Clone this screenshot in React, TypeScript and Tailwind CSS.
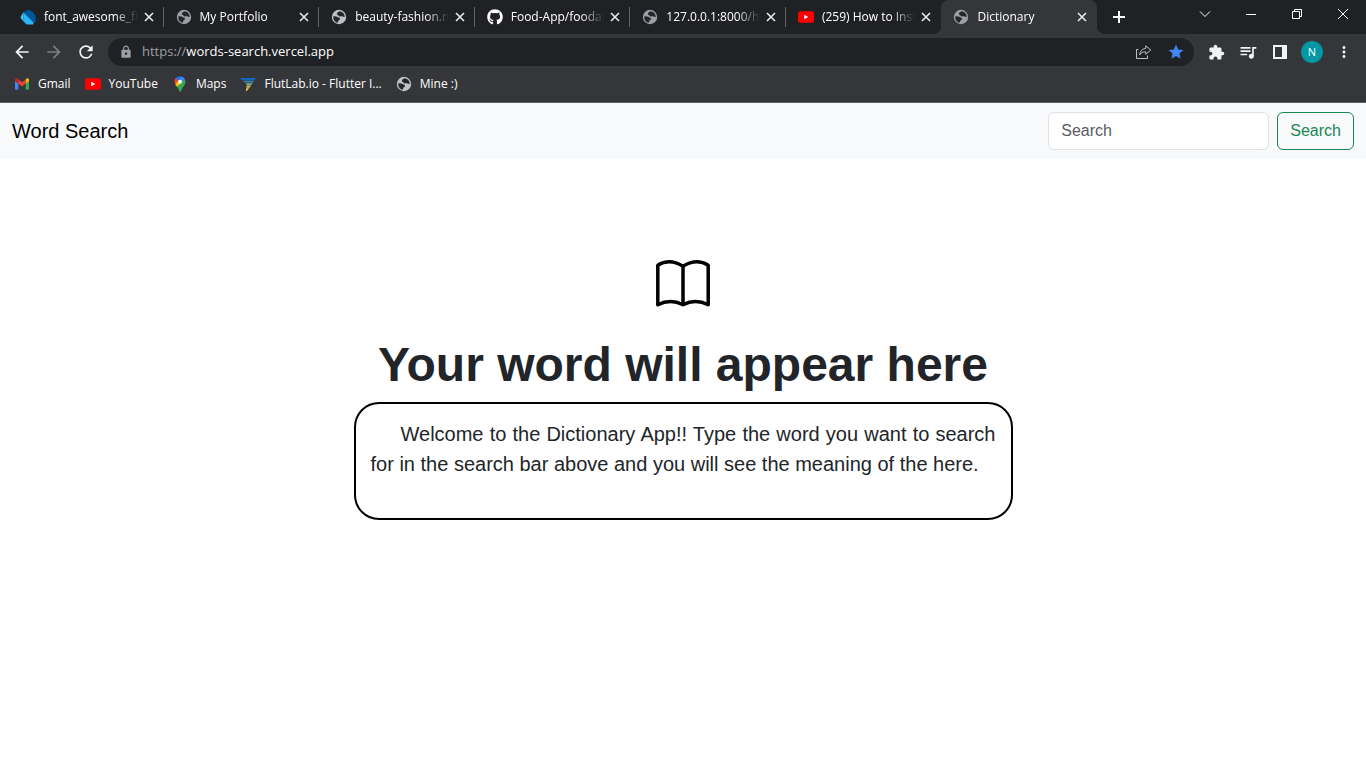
import type { ReactNode } from "react";
import { FaGithub } from "react-icons/fa";
import {
  MdArrowBack,
  MdArrowForward,
  MdExtension,
  MdLock,
  MdMoreVert,
  MdQueueMusic,
  MdRefresh,
  MdStar,
} from "react-icons/md";

function GlobeIcon({ className = "text-[#9aa0a6]" }: { className?: string }) {
  return (
    <svg viewBox="0 0 16 16" className={`size-4 shrink-0 ${className}`} aria-hidden="true">
      <circle cx="8" cy="8" r="7.2" fill="currentColor" />
      <path
        d="M8.800 2.300C7.400 2.800 5.700 3.600 5.900 4.900c.2 1.100 1.500.9 1.700 1.800.2 1 1.600.6 2.600.6 1.100 0 2.200.9 3.500.6.200-2.500-2-5.100-4.900-5.600zM2.300 7.500c1.500-.300 3.200-.200 4.300.6.900.7 2.600.5 2.400 2-.200 1.200-1.600 1.200-1.900 2.200-.100.600-.100 1-.500 1.400C3.800 13.200 2 10.500 2.300 7.500z"
        fill="#26272b"
      />
    </svg>
  );
}

function DartIcon() {
  return (
    <svg viewBox="0 0 16 16" className="size-4 shrink-0" aria-hidden="true">
      <path d="M3.300 3.300L7.600.8c.6-.3 1.200-.2 1.700.2l3.400 2.300 2.900 3.400v6.600h-2.300z" fill="#01579b" />
      <path d="M3.300 3.300v7.900c0 .7.200 1.200.7 1.700l2.700 2.700h6.600v-2.300z" fill="#29b6f6" />
      <path d="M3.300 3.300L.8 7.600c-.3.600-.2 1.200.2 1.700l2.300 3.200z" fill="#40c4ff" />
    </svg>
  );
}

function YouTubeIcon() {
  return (
    <svg viewBox="0 0 16 16" className="size-4 shrink-0" aria-hidden="true">
      <rect x="0" y="2.200" width="16" height="11.600" rx="2.600" fill="#f00" />
      <path d="M6.300 5.700v4.600L10.300 8z" fill="#fff" />
    </svg>
  );
}

function GmailIcon() {
  return (
    <svg viewBox="0 0 16 16" className="size-4 shrink-0" aria-hidden="true">
      <path d="M1 4v8.700c0 .6.400 1 1 1h2.300V6.500z" fill="#4285f4" />
      <path d="M15 4v8.700c0 .6-.4 1-1 1h-2.300V6.500z" fill="#34a853" />
      <path d="M11.700 3.400v4.200L15 5.200V3.900c0-1.300-1.500-2-2.500-1.200z" fill="#fbbc04" />
      <path d="M4.300 7.600V3.400L8 6.200l3.700-2.800v4.200L8 10.400z" fill="#ea4335" />
      <path d="M1 3.900v1.300l3.300 2.400V3.400l-.8-.7C2.500 1.900 1 2.600 1 3.900z" fill="#c5221f" />
    </svg>
  );
}

function MapsIcon() {
  return (
    <svg viewBox="0 0 16 16" className="size-4 shrink-0" aria-hidden="true">
      <path d="M3.700 2.100A5.500 5.500 0 0 1 9.600.6L6 4.900z" fill="#1a73e8" />
      <path d="M9.600.6a5.500 5.500 0 0 1 3.300 2.700L9.600 7.200 8 5.500 6.500 4.300z" fill="#4285f4" />
      <path d="M3.700 2.100A5.500 5.500 0 0 0 3.200 8.300l3.200-3.900z" fill="#ea4335" />
      <path d="M3.200 8.300c.5 1 1.200 1.800 1.900 2.700L9.600 7.200 6.400 4.400z" fill="#fbbc04" />
      <path d="M12.900 3.300c1.400 2.800.2 5-1.400 7.100-1.200 1.600-1.900 2.900-2.500 4.600-.3 1-1.500 1-1.800 0-.5-1.600-1.200-2.800-2.100-4z" fill="#34a853" />
      <circle cx="8" cy="5.700" r="2" fill="#fff" />
    </svg>
  );
}

function FlutLabIcon() {
  return (
    <svg viewBox="0 0 16 16" className="size-4 shrink-0" aria-hidden="true">
      <path d="M0 2h16l-1.600 2.200H2.200C1.200 3.700.500 2.900 0 2z" fill="#1565c0" />
      <path d="M2.800 4.800h11.400l-1.300 1.800H5.200c-1-.3-1.900-1-2.400-1.800z" fill="#2f86b0" />
      <path d="M5.600 7.200h7L11.400 9H6.900z" fill="#7fae8f" />
      <path d="M6.700 9.600h4.200l-1.300 2.100H6.300z" fill="#d8c558" />
      <path d="M6.200 12.200h3L6 15.500z" fill="#ffd740" />
    </svg>
  );
}

function ShareIcon() {
  return (
    <svg viewBox="0 0 16 16" className="size-4" fill="none" stroke="currentColor" aria-hidden="true">
      <path d="M2.500 5.500h-2v9h11v-3" />
      <path d="M9.800 1.800l5 4.200-5 4.200V7.800C7 7.700 5 8.600 3.600 11 4 7.200 6.200 4.600 9.800 4.300z" strokeLinejoin="round" />
    </svg>
  );
}

function ToolButton({ label, className = "", children }: { label: string; className?: string; children: ReactNode }) {
  return (
    <button type="button" aria-label={label} className={`flex h-7 w-8 shrink-0 items-center justify-center ${className}`}>
      {children}
    </button>
  );
}

const tabs: { title: string; icon: ReactNode; active?: boolean }[] = [
  { title: "font_awesome_flutter", icon: <DartIcon /> },
  { title: "My Portfolio", icon: <GlobeIcon /> },
  { title: "beauty-fashion.netlify", icon: <GlobeIcon className="text-[#bdc1c6]" /> },
  { title: "Food-App/foodapp", icon: <FaGithub className="size-4 shrink-0 text-white" /> },
  { title: "127.0.0.1:8000/home", icon: <GlobeIcon /> },
  { title: "(259) How to Install", icon: <YouTubeIcon /> },
  { title: "Dictionary", icon: <GlobeIcon />, active: true },
];

const bookmarks = [
  { title: "Gmail", icon: <GmailIcon /> },
  { title: "YouTube", icon: <YouTubeIcon /> },
  { title: "Maps", icon: <MapsIcon /> },
  { title: "FlutLab.io - Flutter I...", icon: <FlutLabIcon /> },
  { title: "Mine :)", icon: <GlobeIcon className="text-[#bdc1c6]" /> },
];

function TabStrip() {
  return (
    <div className="flex h-[34px] bg-[#202124] pl-2">
      <div className="flex min-w-0 max-w-[1089px] flex-1">
        {tabs.map((tab, i) => (
          <div
            key={tab.title}
            className={`relative flex min-w-0 flex-1 items-center pl-3 pr-2 ${
              tab.active ? "rounded-t-lg bg-[#35363a]" : ""
            }`}
          >
            {tab.active && (
              <>
                <span className="absolute bottom-0 -left-2 size-2 bg-[radial-gradient(circle_at_0_0,#202124_8px,#35363a_8px)]" />
                <span className="absolute bottom-0 -right-2 size-2 bg-[radial-gradient(circle_at_100%_0,#202124_8px,#35363a_8px)]" />
              </>
            )}
            {tab.icon}
            <span className="ml-2 min-w-0 flex-1 overflow-hidden whitespace-nowrap text-xs text-white [mask-image:linear-gradient(to_right,#000_75%,transparent)]">
              {tab.title}
            </span>
            <button type="button" aria-label={`Close ${tab.title}`} className="ml-1 text-[#e8eaed]">
              <svg viewBox="0 0 14 14" className="size-[14px]" stroke="currentColor" strokeWidth="1.600" aria-hidden="true">
                <path d="M3 3l8 8M11 3l-8 8" />
              </svg>
            </button>
            {i < tabs.length - 2 && <span className="absolute right-0 h-5 w-px bg-[#5f6368]" />}
          </div>
        ))}
      </div>
      <button type="button" aria-label="New tab" className="ml-3 text-white">
        <svg viewBox="0 0 20 20" className="size-5" stroke="currentColor" strokeWidth="2" aria-hidden="true">
          <path d="M4 10h12M10 4v12" />
        </svg>
      </button>
      <div className="ml-auto flex h-7 text-white">
        <button type="button" aria-label="Search tabs" className="flex w-[46px] items-center justify-center">
          <svg viewBox="0 0 12 12" className="size-3" fill="none" stroke="currentColor" aria-hidden="true">
            <path d="M1 3.500l5 5 5-5" />
          </svg>
        </button>
        <button type="button" aria-label="Minimize" className="flex w-[46px] items-center justify-center">
          <svg viewBox="0 0 10 10" className="size-[10px]" stroke="currentColor" aria-hidden="true">
            <path d="M0 5.500h10" />
          </svg>
        </button>
        <button type="button" aria-label="Restore" className="flex w-[46px] items-center justify-center">
          <svg viewBox="0 0 10 10" className="size-[10px]" fill="none" stroke="currentColor" aria-hidden="true">
            <path d="M.5 2.500h7v7h-7zM2.500 2.500v-2h7v7h-2" />
          </svg>
        </button>
        <button type="button" aria-label="Close window" className="flex w-[46px] items-center justify-center">
          <svg viewBox="0 0 10 10" className="size-[10px]" stroke="currentColor" aria-hidden="true">
            <path d="M0 0l10 10M10 0L0 10" />
          </svg>
        </button>
      </div>
    </div>
  );
}

function Toolbar() {
  return (
    <div className="flex h-9 items-center px-[6px] text-[#f1f3f4]">
      <ToolButton label="Back">
        <MdArrowBack className="size-5" />
      </ToolButton>
      <ToolButton label="Forward" className="text-[#7c7e82]">
        <MdArrowForward className="size-5" />
      </ToolButton>
      <ToolButton label="Reload">
        <MdRefresh className="size-5" />
      </ToolButton>
      <div className="mx-[6px] flex h-7 flex-1 items-center rounded-full bg-[#202124] pl-[11px] pr-[2px]">
        <MdLock className="size-[14px] text-[#9aa0a6]" />
        <div role="textbox" aria-label="Address" tabIndex={0} className="ml-[9px] flex-1 text-[13px]">
          <span className="text-[#9aa0a6]">https://</span>
          <span className="text-white">words-search.vercel.app</span>
        </div>
        <ToolButton label="Share" className="text-[#bdc1c6]">
          <ShareIcon />
        </ToolButton>
        <ToolButton label="Edit bookmark" className="text-[#4285f4]">
          <MdStar className="size-[18px]" />
        </ToolButton>
      </div>
      <ToolButton label="Extensions">
        <MdExtension className="size-[17px]" />
      </ToolButton>
      <ToolButton label="Media controls">
        <MdQueueMusic className="size-5" />
      </ToolButton>
      <ToolButton label="Side panel">
        <svg viewBox="0 0 20 20" className="size-5" aria-hidden="true">
          <path d="M3 3h14v14H3zM5 5v10h7V5z" fill="currentColor" fillRule="evenodd" />
        </svg>
      </ToolButton>
      <ToolButton label="Profile">
        <span className="flex size-[22px] items-center justify-center rounded-full bg-[#0097a7] text-[11px] text-white">
          N
        </span>
      </ToolButton>
      <ToolButton label="Menu">
        <MdMoreVert className="size-[18px]" />
      </ToolButton>
    </div>
  );
}

function Bookmarks() {
  return (
    <nav aria-label="Bookmarks" className="flex h-7 items-center gap-[14px] px-[14px]">
      {bookmarks.map((b) => (
        <a key={b.title} href="#" className="flex items-center gap-2 whitespace-nowrap text-xs text-white">
          {b.icon}
          {b.title}
        </a>
      ))}
    </nav>
  );
}

export default function App() {
  return (
    <div className="min-h-screen bg-white font-['Liberation_Sans',Arial,sans-serif] text-[#212529]">
      <header className="border-b border-[#5f6064] bg-[#35363a] pb-1 font-['Open_Sans','Noto_Sans',sans-serif]">
        <TabStrip />
        <Toolbar />
        <Bookmarks />
      </header>

      <nav className="flex items-center justify-between bg-[#f8f9fb] px-3 py-[9px]">
        <a href="#" className="text-xl text-black">
          Word Search
        </a>
        <form className="flex gap-2" role="search">
          <input
            type="search"
            aria-label="Search"
            placeholder="Search"
            className="h-[38px] w-[221px] rounded-md border border-[#dee2e6] bg-white px-3 text-base placeholder:text-[#595c5f]"
          />
          <button
            type="button"
            className="h-[38px] rounded-md border border-[#198754] px-3 text-base text-[#198754]"
          >
            Search
          </button>
        </form>
      </nav>

      <main className="mx-auto flex w-1/2 flex-col items-center px-3 pt-[97px]">
        <svg
          viewBox="0 0 60 56"
          className="h-14 w-[60px]"
          fill="none"
          stroke="#000"
          strokeWidth="3.500"
          strokeLinejoin="round"
          aria-hidden="true"
        >
          <path d="M4.800 9.200Q16.500 1.800 30 10.200Q43.500 1.800 55.200 9.200V48.800Q42.500 42.300 30 48.800Q17.500 42.300 4.800 48.800zM30 10.200V48.800" />
        </svg>
        <h1 className="mt-6 whitespace-nowrap text-5xl/[58px] font-bold">Your word will appear here</h1>
        <div className="mt-2 w-full rounded-[25px] border-2 border-black px-[15px] pt-[15px] pb-[39px]">
          <p className="indent-[30px] text-justify text-xl/[30px]">
            Welcome to the Dictionary App!! Type the word you want to search for in the search bar above and you
            will see the meaning of the here.
          </p>
        </div>
      </main>
    </div>
  );
}
